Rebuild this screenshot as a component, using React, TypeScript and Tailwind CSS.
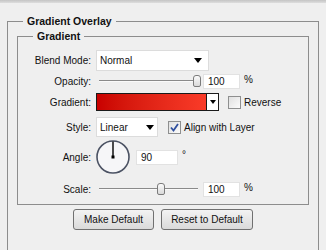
const Caret = ({ small }: { small?: boolean }) => (
  <svg width={small ? 6 : 8} height={small ? 4 : 5} viewBox={small ? "0 0 6 4" : "0 0 8 5"}>
    <path d={small ? "M0 0H6L3 4Z" : "M0 0H8L4 5Z"} fill="#000" />
  </svg>
);

const Slider = ({ pos }: { pos: number }) => (
  <div className="relative w-[107px] h-[14px]">
    <div className="absolute left-[3px] right-[5px] top-[6px] h-[2px] border-t border-[#8a8a8a] bg-[#fafafa]" />
    <div
      className="absolute top-[1px] w-[8px] h-[12px] rounded-t-[3px] rounded-b-[2px] border border-[#7b7b7b] bg-gradient-to-b from-[#fbfbfb] to-[#d9d9d9]"
      style={{ left: pos }}
    />
  </div>
);

const NumBox = ({ value, w }: { value: string; w: string }) => (
  <div className={`${w} h-[15px] bg-white border border-[#e2e2e2] pl-[4px] leading-[13px]`}>{value}</div>
);

const Row = ({ label, h, mt, children }: { label: string; h: string; mt: string; children: React.ReactNode }) => (
  <div className={`flex items-center ${h} ${mt}`}>
    <div className="w-[73px] text-right">{label}</div>
    <div className="ml-[5px] flex items-center">{children}</div>
  </div>
);

export default function App() {
  return (
    <div
      className="w-[326px] h-[250px] overflow-hidden bg-[#efefef] text-[10px] text-[#111]"
      style={{ fontFamily: '"Liberation Sans", Arial, sans-serif' }}
    >
      <div className="h-[3px] bg-gradient-to-b from-[#c4c4c4] to-[#dedede]" />
      <fieldset className="mx-[7px] mt-[11px] h-[300px] border border-[#8d8d8d] p-0 m-0">
        <legend className="ml-[15px] px-[4px] font-bold text-[10.5px] leading-[14px]">Gradient Overlay</legend>
        <fieldset className="mx-[9px] mt-[1px] border border-[#8d8d8d] px-0 pt-[7px] pb-[8px]">
          <legend className="ml-[15px] px-[4px] font-bold text-[10.5px] leading-[14px]">Gradient</legend>

          <Row label="Blend Mode:" h="h-[21px]" mt="mt-0">
            <div className="w-[113px] h-[21px] bg-white border border-[#dcdcdc] flex items-center justify-between pl-[3px] pr-[6px]">
              <span>Normal</span>
              <Caret />
            </div>
          </Row>

          <Row label="Opacity:" h="h-[14px]" mt="mt-[3px]">
            <Slider pos={97} />
            <NumBox value="100" w="w-[37px]" />
            <span className="ml-[4px] -mt-[3px]">%</span>
          </Row>

          <Row label="Gradient:" h="h-[18px]" mt="mt-[5px]">
            <div className="w-[123px] h-[18px] border border-[#1a1a1a] flex">
              <div className="flex-1 bg-gradient-to-r from-[#c90000] to-[#fa3b28]" />
              <div className="w-[12px] bg-white border-l border-[#1a1a1a] flex items-center justify-center">
                <Caret small />
              </div>
            </div>
            <div className="ml-[9px] w-[13px] h-[13px] border border-[#8e8f8f] bg-gradient-to-br from-[#e0e0e0] to-[#fbfbfb]" />
            <span className="ml-[3px]">Reverse</span>
          </Row>

          <Row label="Style:" h="h-[20px]" mt="mt-[6px]">
            <div className="w-[62px] h-[20px] bg-white border border-[#dcdcdc] flex items-center justify-between pl-[3px] pr-[3px]">
              <span>Linear</span>
              <Caret />
            </div>
            <div className="ml-[10px] w-[13px] h-[13px] border border-[#8e8f8f] bg-gradient-to-br from-[#e0e0e0] to-[#fbfbfb] flex items-center justify-center">
              <svg width="9" height="9" viewBox="0 0 9 9">
                <path d="M1 4.5L3.5 7.5L8 1" fill="none" stroke="#2f4f9e" strokeWidth="1.8" />
              </svg>
            </div>
            <span className="ml-[3px]">Align with Layer</span>
          </Row>

          <Row label="Angle:" h="h-[34px]" mt="mt-[3px]">
            <svg width="34" height="34" viewBox="0 0 34 34">
              <circle cx="17" cy="17" r="16" fill="#f6f6f8" stroke="#4b5263" strokeWidth="1.6" />
              <line x1="17" y1="17" x2="17" y2="1.5" stroke="#000" strokeWidth="1.4" />
              <rect x="15.5" y="15.5" width="3" height="3" fill="#000" />
            </svg>
            <div className="ml-[6px]">
              <NumBox value="90" w="w-[42px]" />
            </div>
            <span className="ml-[4px] -mt-[6px]">°</span>
          </Row>

          <Row label="Scale:" h="h-[14px]" mt="mt-[8px]">
            <Slider pos={61} />
            <NumBox value="100" w="w-[37px]" />
            <span className="ml-[4px] -mt-[3px]">%</span>
          </Row>
        </fieldset>

        <div className="mt-[4px] flex justify-center gap-[7px]">
          <button className="w-[81px] h-[21px] rounded-[3px] border border-[#707070] bg-gradient-to-b from-[#f3f3f3] to-[#dadada]">
            Make Default
          </button>
          <button className="w-[92px] h-[21px] rounded-[3px] border border-[#707070] bg-gradient-to-b from-[#f3f3f3] to-[#dadada]">
            Reset to Default
          </button>
        </div>
      </fieldset>
    </div>
  );
}
